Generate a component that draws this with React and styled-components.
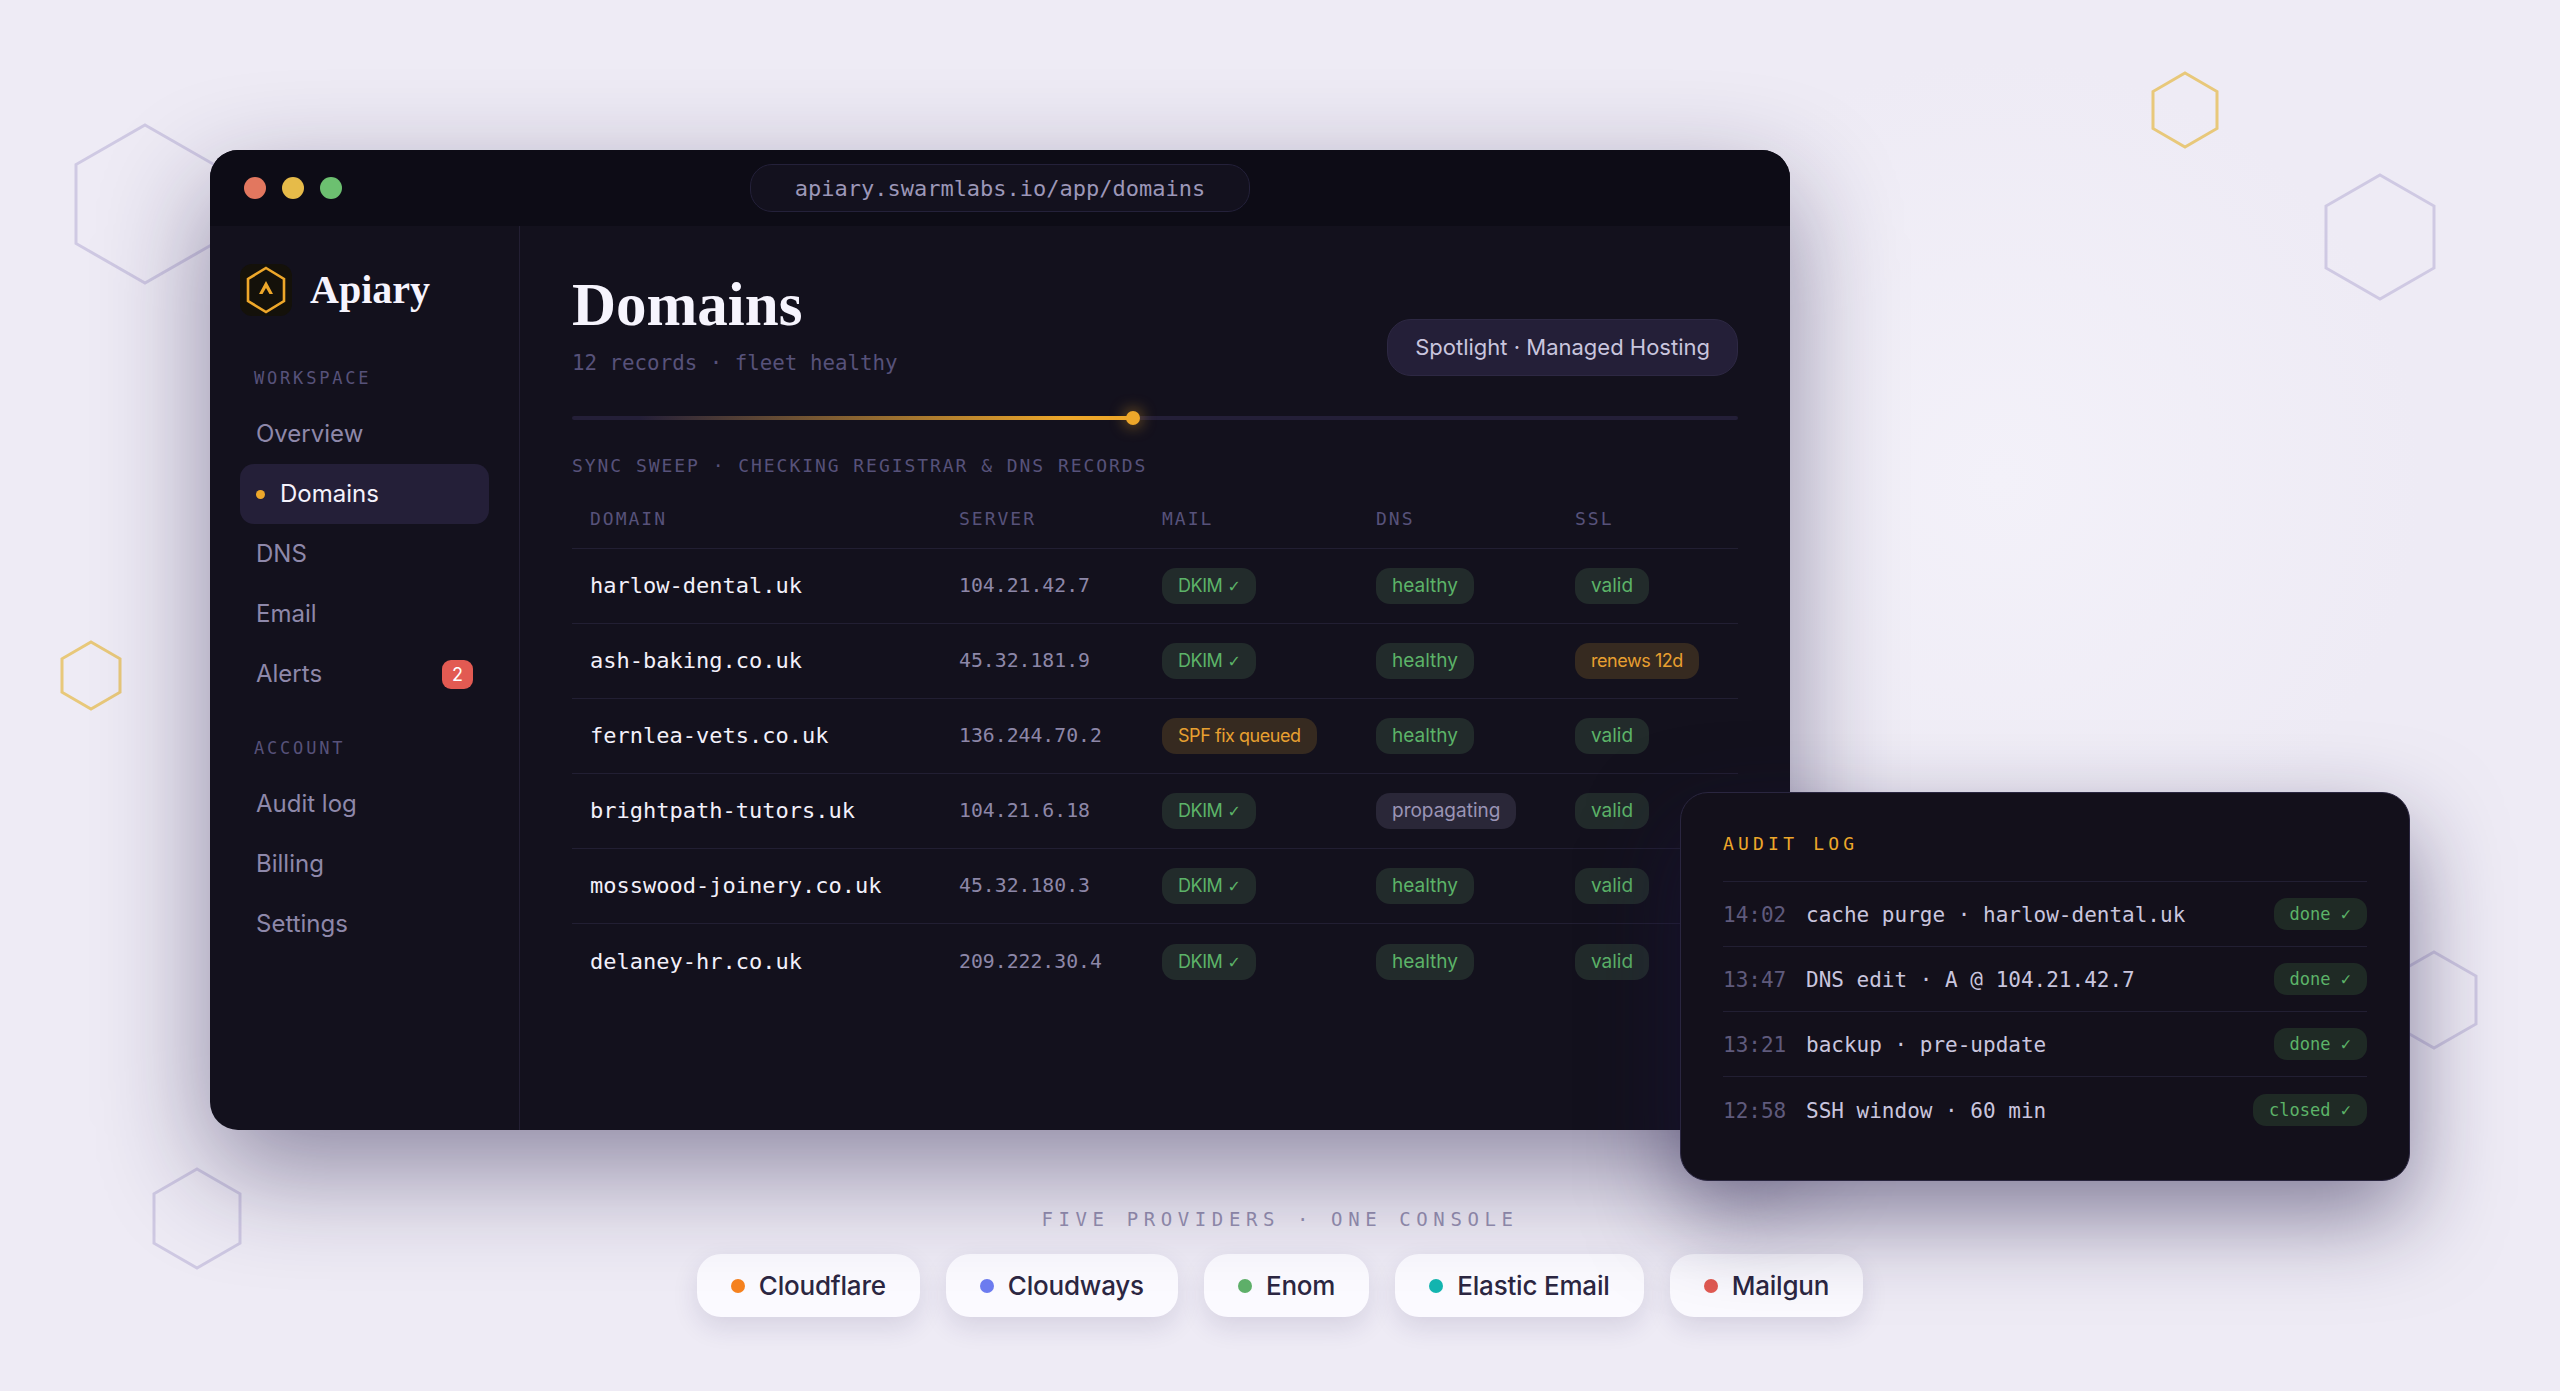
import React from 'react'
import styled, { createGlobalStyle } from 'styled-components'

const MONO = '"DejaVu Sans Mono", "Liberation Mono", monospace'
const SANS = 'Inter, "Open Sans", sans-serif'
const SERIF = '"Liberation Serif", "DejaVu Serif", serif'

const GlobalStyle = createGlobalStyle`
  html, body { margin: 0; padding: 0; }
  body { background: #eeebf5; font-family: ${SANS}; }
`

const Stage = styled.div`
  position: relative;
  width: 2560px;
  height: 1391px;
  overflow: hidden;
  padding-top: 150px;
  box-sizing: border-box;
  background: radial-gradient(circle at 2000px 480px, #f3f1f9 0, #eeebf5 420px);
`

const HexSvg = styled.svg`
  position: absolute;
  left: ${p => p.$x}px;
  top: ${p => p.$y}px;
  overflow: visible;
`

const WindowWrap = styled.div`
  position: relative;
  width: 1580px;
  margin-left: 210px;
`

const Win = styled.div`
  height: 980px;
  border-radius: 28px;
  overflow: hidden;
  background: #13111d;
  display: flex;
  flex-direction: column;
  box-shadow: 0 40px 110px rgba(28, 20, 66, 0.46);
`

const TitleBar = styled.div`
  position: relative;
  height: 76px;
  flex: none;
  background: #0d0c16;
  display: flex;
  align-items: center;
  justify-content: center;
`

const Lights = styled.div`
  position: absolute;
  left: 34px;
  top: 27px;
  display: flex;
  gap: 16px;
`

const Light = styled.span`
  width: 22px;
  height: 22px;
  border-radius: 50%;
  background: ${p => p.$color};
`

const Address = styled.div`
  width: 500px;
  height: 48px;
  box-sizing: border-box;
  border: 1px solid #24213a;
  border-radius: 22px;
  background: #13111e;
  color: #9c97b8;
  font: 400 22px/48px ${MONO};
  text-align: center;
`

const Body = styled.div`
  flex: 1;
  display: flex;
  min-height: 0;
`

const Sidebar = styled.aside`
  width: 310px;
  flex: none;
  box-sizing: border-box;
  border-right: 1px solid #231f33;
  padding: 37px 30px 0;
`

const Brand = styled.div`
  display: flex;
  align-items: center;
  gap: 18px;
  margin-bottom: 51px;
`

const Mark = styled.div`
  width: 52px;
  height: 52px;
  border-radius: 12px;
  background: #14110a;
`

const BrandName = styled.span`
  font: 700 40px/54px ${SERIF};
  color: #f6f4fd;
`

const NavLabel = styled.div`
  height: 20px;
  padding-left: 14px;
  margin-bottom: 16px;
  margin-top: ${p => p.$top || 0}px;
  font: 400 17px/20px ${MONO};
  letter-spacing: 2.8px;
  color: #57527a;
`

const NavItem = styled.div`
  height: 60px;
  box-sizing: border-box;
  display: flex;
  align-items: center;
  padding: 0 16px;
  border-radius: 14px;
  font: 400 24px/60px ${SANS};
  color: ${p => (p.$active ? '#f4f2fc' : '#8e88aa')};
  background: ${p => (p.$active ? '#241f38' : 'transparent')};
`

const NavDot = styled.span`
  width: 9px;
  height: 9px;
  margin-right: 15px;
  border-radius: 50%;
  background: #eda72a;
`

const Count = styled.span`
  margin-left: auto;
  width: 31px;
  height: 29px;
  border-radius: 9px;
  background: #e25a52;
  color: #fff;
  font: 400 18px/29px ${SANS};
  text-align: center;
`

const Main = styled.main`
  flex: 1;
  padding: 43px 52px 0;
`

const Head = styled.div`
  display: flex;
  justify-content: space-between;
  align-items: flex-end;
`

const Title = styled.h1`
  margin: 0;
  font: 700 61px/72px ${SERIF};
  color: #f6f4fd;
`

const Sub = styled.div`
  margin-top: 9px;
  font: 400 20.8px/26px ${MONO};
  color: #57527a;
`

const Spotlight = styled.div`
  height: 57px;
  box-sizing: border-box;
  padding: 0 27px;
  border: 1px solid #2d2843;
  border-radius: 24px;
  background: #241f38;
  color: #c9c5de;
  font: 400 22px/55px ${SANS};
`

const Sweep = styled.div`
  position: relative;
  height: 4px;
  margin-top: 40px;
  border-radius: 2px;
  background: #241f38;
`

const SweepFill = styled.div`
  height: 100%;
  border-radius: 2px;
  background: linear-gradient(90deg, transparent 12%, #eda72a 88%);
`

const SweepDot = styled.span`
  position: absolute;
  top: -5px;
  width: 14px;
  height: 14px;
  margin-left: -7px;
  border-radius: 50%;
  background: #eda72a;
  box-shadow: 0 0 16px rgba(237, 167, 42, 0.75);
`

const SweepLabel = styled.div`
  margin-top: 36px;
  font: 400 18px/20px ${MONO};
  letter-spacing: 1.95px;
  color: #57527a;
`

const Row = styled.div`
  display: grid;
  grid-template-columns: 369px 203px 214px 199px 1fr;
  align-items: center;
  padding: ${p => (p.$head ? '14px 18px 0' : '0 18px')};
  height: ${p => (p.$head ? 73 : 75)}px;
  box-sizing: border-box;
  border-bottom: ${p => (p.$last ? 'none' : '1px solid #221f33')};
`

const HeadCell = styled.span`
  font: 400 18px/20px ${MONO};
  letter-spacing: 2px;
  color: #57527a;
`

const DomainCell = styled.span`
  font: 500 22px/26px ${MONO};
  color: #f2f0fa;
`

const ServerCell = styled.span`
  font: 400 19.8px/26px ${MONO};
  color: #8d87a8;
`

const tones = {
  ok: ['#222b2b', '#5cb368'],
  warn: ['#362a20', '#e8a030'],
  idle: ['#2a2738', '#9a94b5'],
}

const Badge = styled.span`
  justify-self: start;
  height: 36px;
  padding: 0 16px;
  border-radius: 14px;
  background: ${p => tones[p.$tone][0]};
  color: ${p => tones[p.$tone][1]};
  font: 400 ${p => (p.$tight ? 18 : 19)}px/36px ${SANS};
  letter-spacing: ${p => (p.$tight ? '-0.45px' : '0')};
`

const Tick = styled.span`
  margin-left: 5px;
  font: 400 16px/36px "DejaVu Sans", sans-serif;
`

const Panel = styled.section`
  position: absolute;
  left: 1470px;
  top: 642px;
  width: 730px;
  height: 389px;
  box-sizing: border-box;
  padding: 36px 42px 0;
  border: 1px solid #2a2640;
  border-radius: 28px;
  background: #13101b;
  box-shadow: 0 36px 90px rgba(28, 20, 66, 0.5);
`

const PanelTitle = styled.div`
  height: 53px;
  box-sizing: border-box;
  border-bottom: 1px solid #221f33;
  font: 400 18px/30px ${MONO};
  letter-spacing: 4.2px;
  color: #eda72a;
`

const LogRow = styled.div`
  display: flex;
  align-items: center;
  height: 65px;
  box-sizing: border-box;
  border-bottom: ${p => (p.$last ? 'none' : '1px solid #221f33')};
  font: 400 21px/26px ${MONO};
`

const LogTime = styled.span`
  width: 83px;
  padding-top: 2px;
  color: #5f5a7c;
`

const LogText = styled.span`
  padding-top: 2px;
  color: #c9c5de;
`

const LogChip = styled.span`
  margin-left: auto;
  height: 32px;
  padding: 0 16px;
  border-radius: 13px;
  background: #1f2a25;
  color: #5cb368;
  font: 400 17px/32px ${MONO};
`

const Footer = styled.footer`
  margin-top: 79px;
  display: flex;
  flex-direction: column;
  align-items: center;
  gap: 25px;
`

const FooterLabel = styled.div`
  font: 400 19px/20px ${MONO};
  letter-spacing: 5.6px;
  color: #9590b0;
`

const Providers = styled.div`
  display: flex;
  gap: 26px;
`

const Provider = styled.div`
  height: 63px;
  box-sizing: border-box;
  display: flex;
  align-items: center;
  gap: 14px;
  padding: 0 34px;
  border-radius: 24px;
  background: #fbfaff;
  color: #2c2742;
  font: 500 26px/63px ${SANS};
  letter-spacing: -0.2px;
  box-shadow: 0 10px 26px rgba(40, 30, 90, 0.12);
`

const ProviderDot = styled.span`
  width: 14px;
  height: 14px;
  border-radius: 50%;
  background: ${p => p.$color};
`

const hexes = [
  { x: 76, y: 125, w: 138, h: 158, stroke: '#cfc9e3' },
  { x: 2153, y: 73, w: 64, h: 74, stroke: '#e8c87a' },
  { x: 2326, y: 175, w: 108, h: 124, stroke: '#cfc9e3' },
  { x: 62, y: 642, w: 58, h: 67, stroke: '#e8c87a' },
  { x: 154, y: 1169, w: 86, h: 99, stroke: '#cfc9e3' },
  { x: 2392, y: 952, w: 84, h: 96, stroke: '#cfc9e3' },
]

const dkim = ['ok', 'DKIM', true]

const rows = [
  ['harlow-dental.uk', '104.21.42.7', dkim, ['ok', 'healthy'], ['ok', 'valid']],
  ['ash-baking.co.uk', '45.32.181.9', dkim, ['ok', 'healthy'], ['warn', 'renews 12d']],
  ['fernlea-vets.co.uk', '136.244.70.2', ['warn', 'SPF fix queued'], ['ok', 'healthy'], ['ok', 'valid']],
  ['brightpath-tutors.uk', '104.21.6.18', dkim, ['idle', 'propagating'], ['ok', 'valid']],
  ['mosswood-joinery.co.uk', '45.32.180.3', dkim, ['ok', 'healthy'], ['ok', 'valid']],
  ['delaney-hr.co.uk', '209.222.30.4', dkim, ['ok', 'healthy'], ['ok', 'valid']],
]

const logs = [
  ['14:02', 'cache purge · harlow-dental.uk', 'done ✓'],
  ['13:47', 'DNS edit · A @ 104.21.42.7', 'done ✓'],
  ['13:21', 'backup · pre-update', 'done ✓'],
  ['12:58', 'SSH window · 60 min', 'closed ✓'],
]

const providers = [
  ['Cloudflare', '#f6821f'],
  ['Cloudways', '#6d7cf0'],
  ['Enom', '#5fb06a'],
  ['Elastic Email', '#14b5b0'],
  ['Mailgun', '#e25a52'],
]

function Hex({ x, y, w, h, stroke }) {
  const pts = `${w / 2},0 ${w},${h / 4} ${w},${(h * 3) / 4} ${w / 2},${h} 0,${(h * 3) / 4} 0,${h / 4}`
  return (
    <HexSvg $x={x} $y={y} width={w} height={h} viewBox={`0 0 ${w} ${h}`}>
      <polygon points={pts} fill="none" stroke={stroke} strokeWidth="3" />
    </HexSvg>
  )
}

function Logo() {
  return (
    <Mark>
      <svg width="52" height="52" viewBox="0 0 52 52">
        <polygon points="26,4 44,15 44,37 26,48 8,37 8,15" fill="none" stroke="#eda72a" strokeWidth="2.6" />
        <polygon points="26,17 33,30 29.5,30 26,24 22.5,30 19,30" fill="#eda72a" />
      </svg>
    </Mark>
  )
}

function Status({ tone, label, tick }) {
  return (
    <Badge $tone={tone} $tight={tick || tone === 'warn'}>
      {label}
      {tick && <Tick>✓</Tick>}
    </Badge>
  )
}

export default function App() {
  return (
    <Stage>
      <GlobalStyle />
      {hexes.map((h) => (
        <Hex key={`${h.x}-${h.y}`} {...h} />
      ))}
      <WindowWrap>
        <Win>
          <TitleBar>
            <Lights>
              <Light $color="#e2775f" />
              <Light $color="#e6bb49" />
              <Light $color="#6cc070" />
            </Lights>
            <Address>apiary.swarmlabs.io/app/domains</Address>
          </TitleBar>
          <Body>
            <Sidebar>
              <Brand>
                <Logo />
                <BrandName>Apiary</BrandName>
              </Brand>
              <NavLabel>WORKSPACE</NavLabel>
              <NavItem>Overview</NavItem>
              <NavItem $active><NavDot />Domains</NavItem>
              <NavItem>DNS</NavItem>
              <NavItem>Email</NavItem>
              <NavItem>Alerts<Count>2</Count></NavItem>
              <NavLabel $top={34}>ACCOUNT</NavLabel>
              <NavItem>Audit log</NavItem>
              <NavItem>Billing</NavItem>
              <NavItem>Settings</NavItem>
            </Sidebar>
            <Main>
              <Head>
                <div>
                  <Title>Domains</Title>
                  <Sub>12 records · fleet healthy</Sub>
                </div>
                <Spotlight>Spotlight · Managed Hosting</Spotlight>
              </Head>
              <Sweep>
                <SweepFill style={{ width: '48.1%' }} />
                <SweepDot style={{ left: '48.1%' }} />
              </Sweep>
              <SweepLabel>SYNC SWEEP · CHECKING REGISTRAR &amp; DNS RECORDS</SweepLabel>
              <Row $head>
                <HeadCell>DOMAIN</HeadCell>
                <HeadCell>SERVER</HeadCell>
                <HeadCell>MAIL</HeadCell>
                <HeadCell>DNS</HeadCell>
                <HeadCell>SSL</HeadCell>
              </Row>
              {rows.map((r, i) => (
                <Row key={r[0]} $last={i === rows.length - 1}>
                  <DomainCell>{r[0]}</DomainCell>
                  <ServerCell>{r[1]}</ServerCell>
                  <Status tone={r[2][0]} label={r[2][1]} tick={r[2][2]} />
                  <Status tone={r[3][0]} label={r[3][1]} />
                  <Status tone={r[4][0]} label={r[4][1]} />
                </Row>
              ))}
            </Main>
          </Body>
        </Win>
        <Panel>
          <PanelTitle>AUDIT LOG</PanelTitle>
          {logs.map((l, i) => (
            <LogRow key={l[0]} $last={i === logs.length - 1}>
              <LogTime>{l[0]}</LogTime>
              <LogText>{l[1]}</LogText>
              <LogChip>{l[2]}</LogChip>
            </LogRow>
          ))}
        </Panel>
      </WindowWrap>
      <Footer>
        <FooterLabel>FIVE PROVIDERS · ONE CONSOLE</FooterLabel>
        <Providers>
          {providers.map(([name, color]) => (
            <Provider key={name}>
              <ProviderDot $color={color} />
              {name}
            </Provider>
          ))}
        </Providers>
      </Footer>
    </Stage>
  )
}
